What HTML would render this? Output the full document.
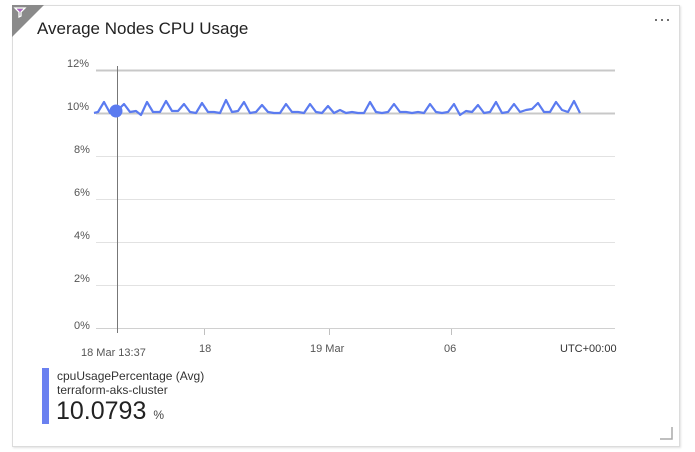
<!DOCTYPE html>
<html><head><style>
body{margin:0;width:695px;height:452px;background:#fff;font-family:"Liberation Sans",sans-serif;overflow:hidden;position:relative}
.card{position:absolute;left:12px;top:5px;width:666px;height:440px;border:1px solid #dcdcdc;box-shadow:1px 1px 2px rgba(0,0,0,.12);background:#fff}
.t{position:absolute;font-size:11px;color:#555}
</style></head><body>
<div class="card"></div>
<svg style="position:absolute;left:0;top:0" width="695" height="452">
<polygon points="12,5 44,5 12,37" fill="#8a8a8a"/>
<path d="M15,8 h10 l-4,4 v4 l-2,1 v-5 z" fill="none" stroke="#fff" stroke-width="1.3"/>
<path d="M17,9 h6 l-3,3 z" fill="#b05fc7"/>
<g stroke-width="1">
<line x1="96" y1="70.5" x2="615" y2="70.5" stroke="#c8c8c8" stroke-width="2"/>
<line x1="96" y1="113.5" x2="615" y2="113.5" stroke="#c8c8c8" stroke-width="2"/>
<line x1="96" y1="156.5" x2="615" y2="156.5" stroke="#e2e2e2"/>
<line x1="96" y1="199.5" x2="615" y2="199.5" stroke="#e2e2e2"/>
<line x1="96" y1="242.5" x2="615" y2="242.5" stroke="#e2e2e2"/>
<line x1="96" y1="285.5" x2="615" y2="285.5" stroke="#e2e2e2"/>
<line x1="96" y1="328.5" x2="615" y2="328.5" stroke="#d0d0d0"/>
<line x1="204.5" y1="329" x2="204.5" y2="335" stroke="#c0c0c0"/>
<line x1="329.5" y1="329" x2="329.5" y2="335" stroke="#c0c0c0"/>
<line x1="451.5" y1="329" x2="451.5" y2="335" stroke="#c0c0c0"/>
</g>
<polyline fill="none" stroke="#5b7bf0" stroke-width="2.2" stroke-linejoin="round" points="94,113 98,112 104,102 110,113 117,111 124,104 130,112 136,111 141,115 147,102 153,112 160,112 166,101 172,111 178,111 184,104 190,112 196,113 202,103 208,112 214,112 220,113 226,100 232,112 238,111 244,102 250,113 256,112 262,105 268,112 274,113 280,113 286,104 292,112 298,112 304,113 310,104 316,112 322,113 328,106 334,113 340,110 346,113 352,112 358,113 364,113 370,102 376,112 382,113 388,112 394,104 400,112 406,112 412,113 418,112 424,113 430,104 436,112 442,113 448,112 454,104 460,115 466,111 472,112 478,105 484,113 490,112 496,102 502,113 508,112 514,104 520,112 526,110 532,109 538,103 544,112 550,112 556,102 562,110 568,112 574,101 580,113"/>
<line x1="117.5" y1="66" x2="117.5" y2="333" stroke="#777" stroke-width="1"/>
<circle cx="116" cy="111" r="6.5" fill="#5b7bf0"/>
<rect x="42" y="368" width="7" height="56" fill="#6a80f0"/>
<path d="M672,427 v12 h-12" fill="none" stroke="#aaa" stroke-width="1.5"/>
<circle cx="656" cy="20" r="1" fill="#444"/><circle cx="662" cy="20" r="1" fill="#444"/><circle cx="668" cy="20" r="1" fill="#444"/>
</svg>
<div style="position:absolute;left:37px;top:19px;font-size:17px;color:#222">Average Nodes CPU Usage</div>
<div class="t" style="left:67px;top:58px">12%</div>
<div class="t" style="left:67px;top:101px">10%</div>
<div class="t" style="left:74px;top:144px">8%</div>
<div class="t" style="left:74px;top:187px">6%</div>
<div class="t" style="left:74px;top:230px">4%</div>
<div class="t" style="left:74px;top:273px">2%</div>
<div class="t" style="left:74px;top:320px">0%</div>
<div class="t" style="left:81px;top:347px">18 Mar 13:37</div>
<div class="t" style="left:199px;top:343px">18</div>
<div class="t" style="left:310px;top:343px">19 Mar</div>
<div class="t" style="left:444px;top:343px">06</div>
<div class="t" style="left:560px;top:343px;color:#333">UTC+00:00</div>
<div style="position:absolute;left:57px;top:369px;font-size:12px;color:#333">cpuUsagePercentage (Avg)</div>
<div style="position:absolute;left:57px;top:383px;font-size:12px;color:#333">terraform-aks-cluster</div>
<div style="position:absolute;left:56px;top:397px;font-size:25px;color:#222">10.0793 <span style="font-size:12px;color:#444">%</span></div>
</body></html>
